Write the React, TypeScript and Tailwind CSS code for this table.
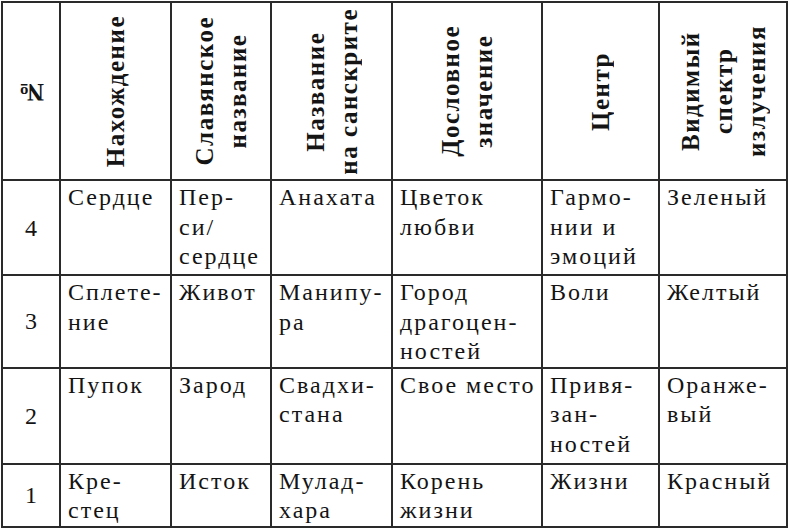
import React from "react";

type Row = {
  num: string;
  h: string;
  cells: string[][];
};

const headers: string[][] = [
  ["№"],
  ["Нахождение"],
  ["Славянское", "название"],
  ["Название", "на санскрите"],
  ["Дословное", "значение"],
  ["Центр"],
  ["Видимый", "спектр", "излучения"],
];

const rows: Row[] = [
  {
    num: "4",
    h: "h-[95px]",
    cells: [
      ["Сердце"],
      ["Пер-", "си/", "сердце"],
      ["Анахата"],
      ["Цветок", "любви"],
      ["Гармо-", "нии и", "эмоций"],
      ["Зеленый"],
    ],
  },
  {
    num: "3",
    h: "h-[91px]",
    cells: [
      ["Сплете-", "ние"],
      ["Живот"],
      ["Манипу-", "ра"],
      ["Город", "драгоцен-", "ностей"],
      ["Воли"],
      ["Желтый"],
    ],
  },
  {
    num: "2",
    h: "h-[96px]",
    cells: [
      ["Пупок"],
      ["Зарод"],
      ["Свадхи-", "стана"],
      ["Свое место"],
      ["Привя-", "зан-", "ностей"],
      ["Оранже-", "вый"],
    ],
  },
  {
    num: "1",
    h: "h-[63px]",
    cells: [
      ["Кре-", "стец"],
      ["Исток"],
      ["Мулад-", "хара"],
      ["Корень", "жизни"],
      ["Жизни"],
      ["Красный"],
    ],
  },
];

const cols = [
  "w-[58px]",
  "w-[111px]",
  "w-[100px]",
  "w-[121px]",
  "w-[150px]",
  "w-[117px]",
  "w-[128px]",
];

function Lines({ lines }: { lines: string[] }) {
  return (
    <>
      {lines.map((l, i) => (
        <React.Fragment key={i}>
          {i > 0 && <br />}
          {l}
        </React.Fragment>
      ))}
    </>
  );
}

export default function App() {
  return (
    <div className="w-[790px] h-[528px] bg-white overflow-hidden pl-px pt-px font-['Liberation_Serif',serif]">
      <table className="table-fixed border-collapse text-[#141414] font-['Liberation_Serif',serif]">
        <colgroup>
          {cols.map((c, i) => (
            <col key={i} className={c} />
          ))}
        </colgroup>
        <thead>
          <tr className="h-[178px]">
            {headers.map((h, i) => (
              <th
                key={i}
                className="border-2 border-[#2a2a2a] p-0 align-middle font-bold"
              >
                <div className="flex h-[174px] items-center justify-center">
                  <div className="[writing-mode:vertical-rl] rotate-180 whitespace-nowrap text-center text-[25px] leading-[33px] tracking-[1.5px]">
                    <Lines lines={h} />
                  </div>
                </div>
              </th>
            ))}
          </tr>
        </thead>
        <tbody>
          {rows.map((r) => (
            <tr key={r.num} className={r.h}>
              <td className="border-2 border-[#2a2a2a] p-0 text-center align-middle text-[24px] leading-[30px]">
                {r.num}
              </td>
              {r.cells.map((c, j) => (
                <td
                  key={j}
                  className="border-2 border-[#2a2a2a] pl-[7px] pt-[2px] pb-0 pr-0 align-top whitespace-nowrap text-[24px] leading-[29.5px] tracking-[2px]"
                >
                  <Lines lines={c} />
                </td>
              ))}
            </tr>
          ))}
        </tbody>
      </table>
    </div>
  );
}
